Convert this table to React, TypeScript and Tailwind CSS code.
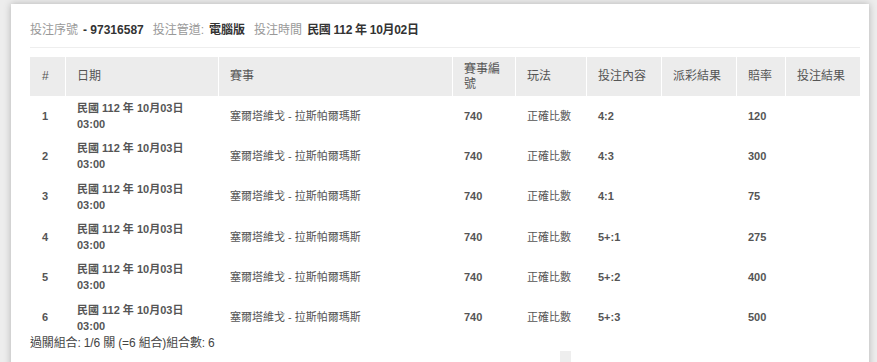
import React from "react";

const rows = [
  { n: 1, bet: "4:2", odds: "120" },
  { n: 2, bet: "4:3", odds: "300" },
  { n: 3, bet: "4:1", odds: "75" },
  { n: 4, bet: "5+:1", odds: "275" },
  { n: 5, bet: "5+:2", odds: "400" },
  { n: 6, bet: "5+:3", odds: "500" },
];

const cols = "grid grid-cols-[35px_152px_233px_62px_70px_74px_74px_48px_74px] gap-x-px";

export default function App() {
  return (
    <div
      className="relative w-[877px] h-[362px] overflow-hidden bg-[#ededed]"
      style={{ fontFamily: '"Liberation Sans", Arial, "Noto Sans CJK TC", sans-serif' }}
    >
      <div className="absolute left-[11px] top-[4px] w-[858px] h-[400px] bg-white shadow-[0_0_7px_rgba(0,0,0,0.25)]">
        <div className="pl-[19px] pr-[9px] pt-[16px]">
          <div className="flex items-center h-[20px] text-[12px] leading-[20px] border-b border-[#eeeeee] pb-[7px] box-content">
            <span className="text-[#999]">投注序號</span>
            <span className="ml-[5px] font-bold text-[#333]">- 97316587</span>
            <span className="ml-[9px] text-[#999]">投注管道:</span>
            <span className="ml-[5px] font-bold text-[#333]">電腦版</span>
            <span className="ml-[9px] text-[#999]">投注時間</span>
            <span className="ml-[5px] font-bold text-[#333] tracking-[-0.3px]">民國 112 年 10月02日</span>
          </div>

          <div className="mt-[9px] text-[#555]">
            <div className={`${cols} bg-white text-[12px]`}>
              {["#", "日期", "賽事", "賽事編號", "玩法", "投注內容", "派彩結果", "賠率", "投注結果"].map((h, i) => (
                <div
                  key={i}
                  className={`bg-[#ececec] h-[39px] flex items-center leading-[15px] ${i === 0 ? "pl-[12px]" : "pl-[11px]"} ${i === 3 ? "pr-[14px]" : ""}`}
                >
                  {h}
                </div>
              ))}
            </div>
            {rows.map((r) => (
              <div key={r.n} className={`${cols} h-[40.3px] items-center text-[11px]`}>
                <div className="pl-[12px] font-bold">{r.n}</div>
                <div className="pl-[11px] font-bold leading-[16px]">
                  <div>民國 112 年 10月03日</div>
                  <div>03:00</div>
                </div>
                <div className="pl-[11px]">塞爾塔維戈 - 拉斯帕爾瑪斯</div>
                <div className="pl-[11px] font-bold">740</div>
                <div className="pl-[11px]">正確比數</div>
                <div className="pl-[11px] font-bold">{r.bet}</div>
                <div className="pl-[11px]"></div>
                <div className="pl-[11px] font-bold">{r.odds}</div>
                <div className="pl-[11px]"></div>
              </div>
            ))}
            <div className="mt-[-3px] text-[12px] leading-[16px] text-[#444] tracking-[-0.15px]">過關組合: 1/6 關 (=6 組合)組合數: 6</div>
          </div>
        </div>
        <div className="absolute left-[549px] top-[347px] w-[11px] h-[20px] bg-[#eeeeee]"></div>
      </div>
    </div>
  );
}
